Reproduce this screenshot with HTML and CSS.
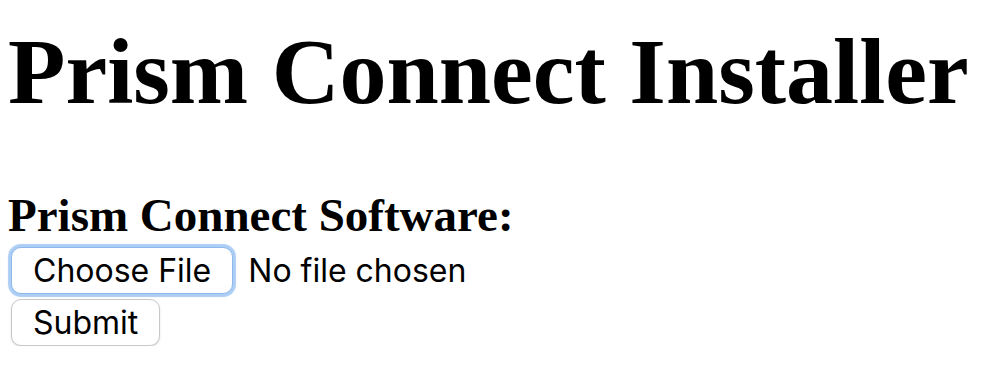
FILE: index.html
```html
<!DOCTYPE html>
<html lang="en">
<head>
    <meta charset="UTF-8">
    <meta name="viewport" content="width=device-width, initial-scale=1.0">
    <title>Prism Connect Installer</title>
    <link rel="stylesheet" href="styles.css">
</head>
<body>
    <h1>Prism Connect Installer</h1>

    <form id="installForm" action="/upload" method="post" enctype="multipart/form-data">
        <label class="field-label" for="software">Prism Connect Software:</label>
        <div class="file-row">
            <input type="file" id="software" name="software" class="file-input">
            <label for="software" class="btn btn-focus">Choose File</label>
            <span class="file-name">No file chosen</span>
        </div>
        <button type="submit" class="btn submit-btn">Submit</button>
    </form>
</body>
</html>
```

FILE: styles.css
```css
body {
    margin: 0;
    padding: 0 8px;
    font-family: "Liberation Serif", "Times New Roman", serif;
    color: #000;
    background-color: #fff;
}
h1 {
    margin: 19px 0 0;
    font-size: 94px;
    line-height: 104px;
    font-weight: bold;
}
.field-label {
    display: block;
    margin-top: 66px;
    font-size: 47px;
    line-height: 52px;
    font-weight: bold;
}
.file-input {
    display: none;
}
.file-row {
    display: flex;
    align-items: center;
    margin-top: 6px;
}
.btn {
    display: inline-flex;
    align-items: center;
    box-sizing: border-box;
    height: 47px;
    margin-left: 3px;
    padding: 0 21px;
    font-family: Inter, "Liberation Sans", sans-serif;
    font-size: 32px;
    color: #000;
    background: #fff;
    border: 1px solid #c8c8c8;
    border-radius: 10px;
    box-shadow: 0 1px 2px rgba(0,0,0,0.14);
    cursor: pointer;
}
.btn-focus {
    border-color: #8fb9ec;
    box-shadow: 0 0 1px 3px #accdf4;
}
.file-name {
    margin-left: 15px;
    font-family: Inter, "Liberation Sans", sans-serif;
    font-size: 32px;
}
.submit-btn {
    display: flex;
    margin-top: 5px;
}
```
